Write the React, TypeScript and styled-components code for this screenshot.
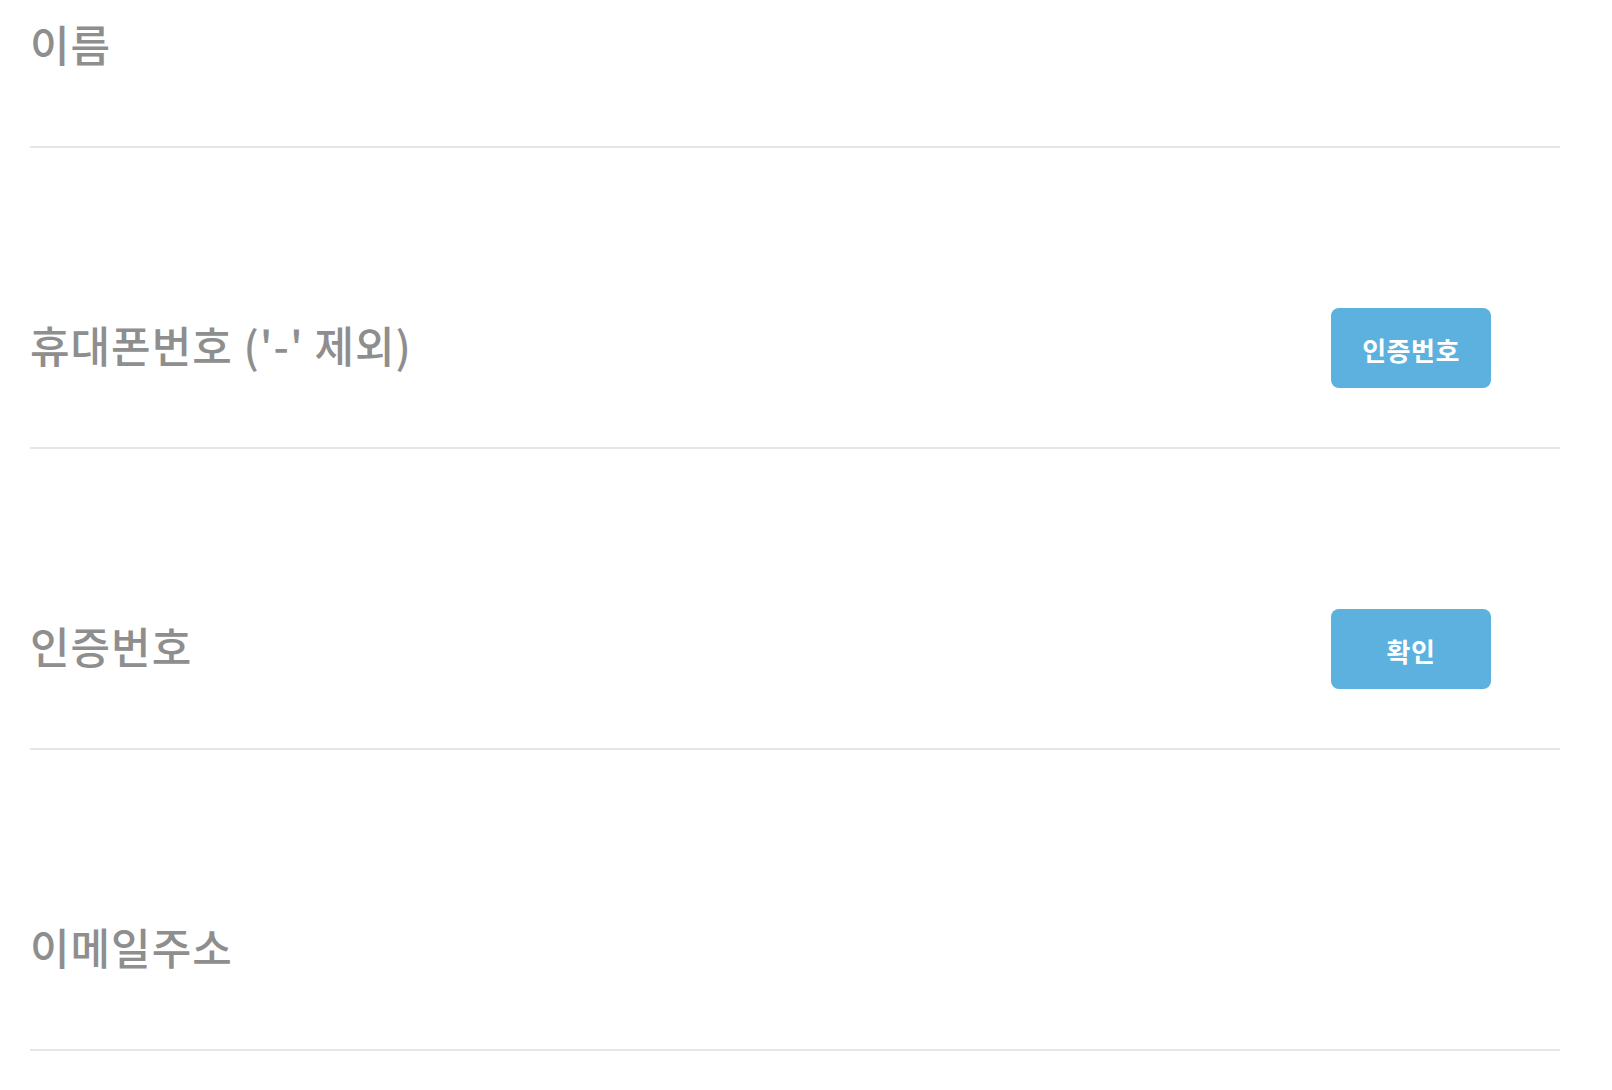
import React from 'react';
import styled, { createGlobalStyle } from 'styled-components';

interface FieldItem {
  id: string;
  label: string;
  action?: string;
}

const fields: FieldItem[] = [
  { id: 'name', label: '이름' },
  { id: 'phone', label: "휴대폰번호 ('-' 제외)", action: '인증번호' },
  { id: 'code', label: '인증번호', action: '확인' },
  { id: 'email', label: '이메일주소' },
];

const App = () => {
  return (
    <>
      <GlobalStyle />
      <Form>
        {fields.map((field) => (
          <Field key={field.id}>
            <Label>{field.label}</Label>
            {field.action && <ActionButton type="button">{field.action}</ActionButton>}
          </Field>
        ))}
      </Form>
    </>
  );
};

const GlobalStyle = createGlobalStyle`
  html, body {
    margin: 0;
    padding: 0;
    background: #ffffff;
    overflow: hidden;
  }

  body {
    font-family: 'Noto Sans CJK KR', 'Noto Sans', sans-serif;
  }
`;

const Form = styled.div`
  margin: -153px 52px 0 30px;
`;

const Field = styled.div`
  display: flex;
  align-items: center;
  justify-content: space-between;
  height: 199px;
  margin-top: 100px;
  border-bottom: 2px solid #e6e6e6;
`;

const Label = styled.span`
  margin-bottom: 8px;
  font-size: 43px;
  font-weight: 500;
  color: #8e8e8e;
  letter-spacing: 1px;
`;

const ActionButton = styled.button`
  width: 160px;
  height: 80px;
  margin-right: 69px;
  padding: 4px 0 0;
  border: none;
  border-radius: 8px;
  background: #5cb1de;
  color: #ffffff;
  font-family: 'Noto Sans CJK KR', 'Noto Sans', sans-serif;
  font-size: 26px;
  font-weight: 700;
  letter-spacing: 0.5px;
  cursor: pointer;
`;

export default App;
